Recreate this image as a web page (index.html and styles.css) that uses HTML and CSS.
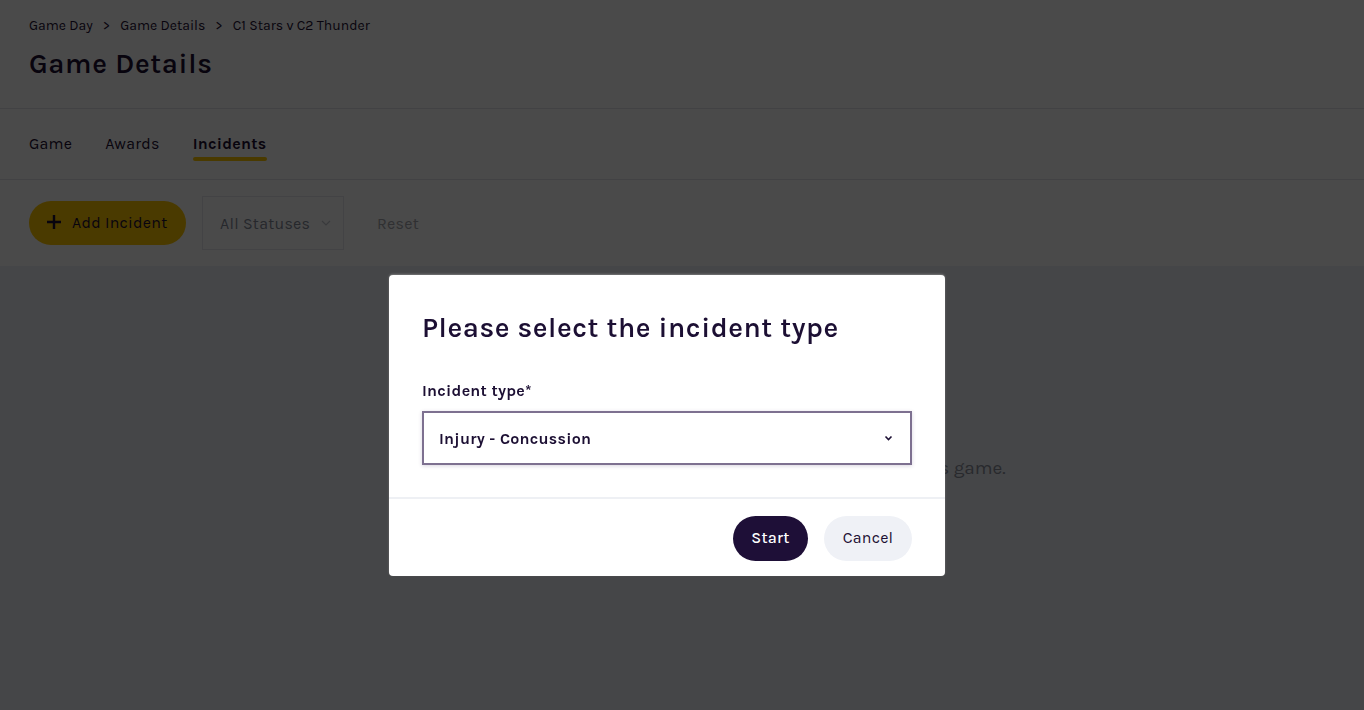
FILE: index.html
```html
<!DOCTYPE html>
<html lang="en">
<head>
    <meta charset="UTF-8">
    <link rel="stylesheet" href="styles.css">
    <title>Game Details</title>
</head>
<body>

<header class="page-head">
    <nav class="crumbs">
        <span>Game Day</span>
        <span class="sep">&gt;</span>
        <span>Game Details</span>
        <span class="sep">&gt;</span>
        <span>C1 Stars v C2 Thunder</span>
    </nav>
    <h1 class="title">Game Details</h1>
</header>

<div class="tabs">
    <span class="tab">Game</span>
    <span class="tab">Awards</span>
    <span class="tab active">Incidents</span>
</div>

<div class="toolbar">
    <button class="add-btn">
        <svg width="16" height="16" viewBox="0 0 16 16"><path d="M8 1v14M1 8h14" stroke="#1c0f33" stroke-width="2.4" fill="none"/></svg>
        Add Incident
    </button>
    <div class="status-select">
        All Statuses
        <svg width="10" height="6" viewBox="0 0 10 6"><path d="M1 1l4 4 4-4" stroke="#c4c6ce" stroke-width="1.2" fill="none"/></svg>
    </div>
    <span class="reset">Reset</span>
</div>

<main class="content">
    <p class="empty">There are no incidents that have been recorded against this game.</p>
</main>

<div class="overlay">
    <div class="modal">
        <div class="modal-body">
            <h2 class="modal-title">Please select the incident type</h2>
            <label class="field-label">Incident type*</label>
            <div class="type-select">
                <span>Injury - Concussion</span>
                <svg width="9" height="6" viewBox="0 0 9 6"><path d="M1.5 1.5l3 3 3-3" stroke="#1c0f33" stroke-width="1.6" fill="none"/></svg>
            </div>
        </div>
        <div class="modal-foot">
            <button class="start-btn">Start</button>
            <button class="cancel-btn">Cancel</button>
        </div>
    </div>
</div>

</body>
</html>
```

FILE: styles.css
```css
body {
    margin: 0;
    background-color: #eef1f7;
    font-family: Karla, Inter, "Noto Sans", sans-serif;
    color: #1c0f33;
    height: 710px;
    overflow: hidden;
}

.page-head {
    background: #fff;
    padding: 17px 29px 0;
    height: 91px;
    border-bottom: 1px solid #e2e4ea;
}

.crumbs {
    font-size: 14px;
    display: flex;
    gap: 9px;
    height: 18px;
    line-height: 18px;
}

.crumbs .sep {
    margin: 0 1px;
}

.title {
    margin: 11px 0 0;
    font-size: 28px;
    font-weight: 600;
    letter-spacing: 0.65px;
    line-height: 36px;
}

.tabs {
    background: #fff;
    height: 70px;
    padding: 0 29px;
    display: flex;
    gap: 33px;
    border-bottom: 1px solid #e2e4ea;
}

.tab {
    font-size: 16px;
    letter-spacing: 0.25px;
    line-height: 20px;
    padding-top: 25px;
    height: 20px;
}

.tab.active {
    font-weight: 700;
    position: relative;
}

.tab.active::after {
    content: "";
    position: absolute;
    left: 0;
    right: 0;
    top: calc(100% + 3px);
    height: 4px;
    border-radius: 2px;
    background: #ffc800;
}

.toolbar {
    background: #fff;
    height: 86px;
    padding: 0 29px;
    display: flex;
    align-items: center;
}

.add-btn {
    height: 44px;
    width: 157px;
    border: none;
    border-radius: 22px;
    background: #ffc700;
    font-family: inherit;
    font-size: 16px;
    letter-spacing: 0.25px;
    color: #1c0f33;
    display: flex;
    align-items: center;
    gap: 10px;
    padding: 0 0 2px 17px;
}

.status-select {
    margin-left: 16px;
    width: 142px;
    height: 54px;
    border: 1px solid #e6e8ee;
    display: flex;
    align-items: center;
    gap: 11px;
    padding-left: 17px;
    box-sizing: border-box;
    font-size: 16px;
    letter-spacing: 0.25px;
    color: #858a99;
}

.reset {
    margin-left: 33px;
    font-size: 16px;
    letter-spacing: 0.25px;
    color: #a4a6ae;
}

.content {
    text-align: center;
    padding: 191px 0 0 76px;
}

.empty {
    margin: 0;
    font-size: 19px;
    color: #8a8f9c;
}

.overlay {
    position: fixed;
    inset: 0;
    background: rgba(0, 0, 0, 0.71);
    display: flex;
    justify-content: center;
    align-items: flex-start;
    padding-right: 30px;
}

.modal {
    margin-top: 275px;
    width: 556px;
    background: #fff;
    border-radius: 4px;
    box-shadow: 0 -1px 2px rgba(255, 255, 255, 0.25);
}

.modal-body {
    padding: 36px 33px 32px;
    border-bottom: 2px solid #eef0f4;
}

.modal-title {
    margin: 0;
    font-size: 28px;
    font-weight: 600;
    letter-spacing: 0.55px;
    line-height: 34px;
}

.field-label {
    display: block;
    margin-top: 36px;
    font-size: 16px;
    letter-spacing: 0.25px;
    font-weight: 700;
    line-height: 20px;
}

.type-select {
    margin-top: 10px;
    height: 54px;
    border: 2px solid #7d7090;
    box-sizing: border-box;
    box-shadow: 0 1px 4px rgba(60, 40, 90, 0.2);
    display: flex;
    align-items: center;
    justify-content: space-between;
    padding: 0 17px 0 15px;
    font-size: 16px;
    letter-spacing: 0.25px;
    font-weight: 700;
}

.modal-foot {
    display: flex;
    justify-content: flex-end;
    gap: 16px;
    padding: 17px 33px 15px;
}

.start-btn,
.cancel-btn {
    height: 45px;
    border: none;
    border-radius: 23px;
    font-family: inherit;
    font-size: 16px;
    letter-spacing: 0.25px;
    padding: 0 0 2px;
}

.start-btn {
    width: 75px;
    background: #1e0f37;
    color: #fff;
    font-weight: 500;
}

.cancel-btn {
    width: 88px;
    background: #eff1f6;
    color: #1c0f33;
}
```
